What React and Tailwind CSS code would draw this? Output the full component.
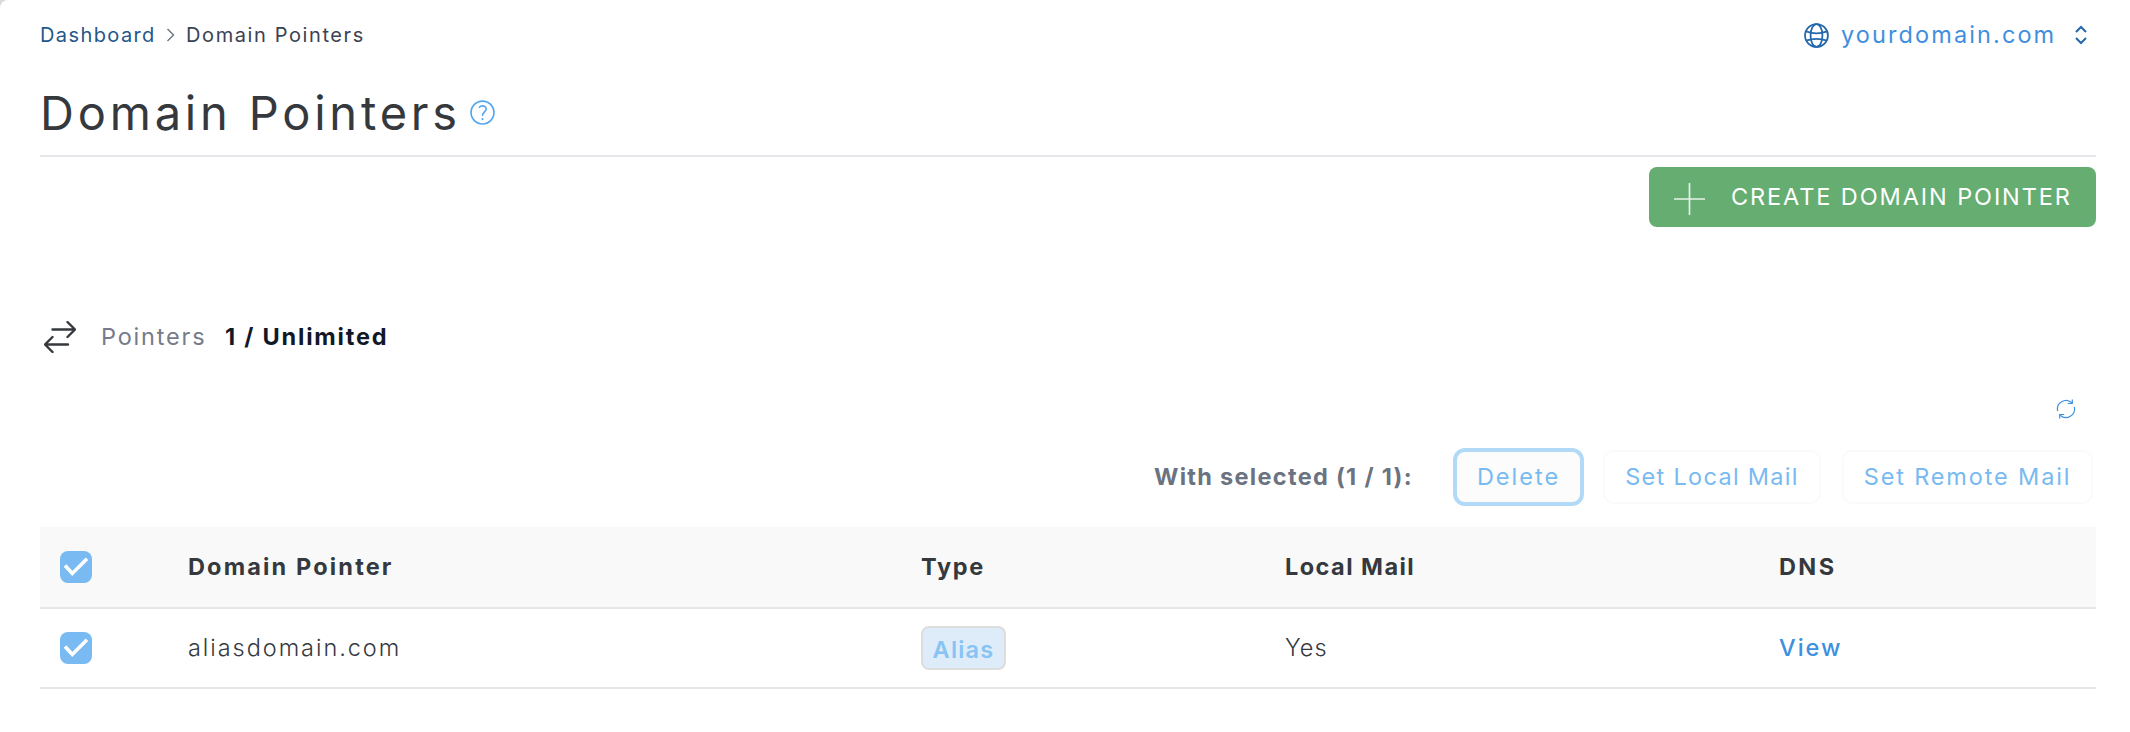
import { useState } from "react";

const pointers = [
  { domain: "aliasdomain.com", type: "Alias", localMail: "Yes" },
];

function GlobeIcon() {
  return (
    <svg width="25" height="25" viewBox="0 0 24 24" fill="none" stroke="currentColor" strokeWidth="1.7">
      <circle cx="12" cy="12" r="11" />
      <ellipse cx="12" cy="12" rx="5.7" ry="11" />
      <path d="M2 8c6 2.4 14 2.4 20 0M1.8 17c6-2 14.4-2 20.4 0" />
    </svg>
  );
}

function HelpIcon() {
  return (
    <svg width="25" height="25" viewBox="0 0 24 24" fill="none" stroke="currentColor" strokeWidth="1.6" strokeLinecap="round">
      <circle cx="12" cy="12" r="11" />
      <path d="M9 6.9c1-1.1 2.3-1.3 3.4-1.2 2 .2 3.3 1.5 3.1 3.2-.2 2.3-3.2 2.8-3.5 5.6" />
      <path d="M12 18.3v.1" strokeWidth="1.9" />
    </svg>
  );
}

function SwapIcon() {
  return (
    <svg width="32" height="32" viewBox="0 0 32 32" fill="none" stroke="currentColor" strokeWidth="2.4" strokeLinecap="round" strokeLinejoin="round">
      <path d="M8.5 8.5H31M23.5 1l7.5 7.5-7.5 7.5M24 23.5H1M8.5 16L1 23.5 8.5 31" />
    </svg>
  );
}

function RefreshIcon() {
  return (
    <svg width="20" height="20" viewBox="0 0 20 20" fill="none" stroke="currentColor" strokeWidth="1.2">
      <path d="M1.7 12.2A8.6 8.6 0 0 1 15.8 3.8M18.3 7.8A8.6 8.6 0 0 1 4.2 16.2" />
      <path d="M16.3.5v4h-4.5M3.7 19.5v-4h4.5" />
    </svg>
  );
}

function Checkbox({ checked, onChange }) {
  return (
    <button onClick={onChange} className="flex w-8 h-8 rounded-lg bg-[#78baf1]">
      {checked && (
        <svg width="32" height="32" viewBox="0 0 32 32" fill="none" stroke="white" strokeWidth="3.6">
          <path d="M5 14.5l7.3 8L27 7.8" />
        </svg>
      )}
    </button>
  );
}

export default function App() {
  const [selected, setSelected] = useState(true);
  const toggle = () => setSelected(!selected);

  return (
    <div className="bg-[#d8dade]">
      <div className="w-[2130px] h-[732px] pl-10 pr-[34px] bg-white rounded-tl-lg overflow-hidden font-['Inter',sans-serif] text-[23.5px] leading-8 text-[#35393e] whitespace-nowrap">
        <header className="flex items-center justify-between h-[70px]">
          <nav className="flex items-center text-[20px] text-[#3b4252]">
            <a href="#" className="w-[127px] text-[#25578a] tracking-[1.4px]">Dashboard</a>
            <svg width="19" height="14" viewBox="0 0 19 14" fill="none" stroke="#6b7280" strokeWidth="1.4">
              <path d="M0.5 1l6 6-6 6" />
            </svg>
            <span className="tracking-[1.6px]">Domain Pointers</span>
          </nav>
          <button className="flex items-center w-[292px] text-[#2468ab]">
            <GlobeIcon />
            <span className="w-[234px] pl-3 text-left text-[#3f8fdf] tracking-[2.1px]">yourdomain.com</span>
            <svg className="ml-3" width="12" height="20" viewBox="0 0 12 20" fill="none" stroke="currentColor" strokeWidth="2">
              <path d="M1 7l5-5 5 5M1 13l5 5 5-5" />
            </svg>
          </button>
        </header>

        <div className="flex items-center h-[87px] border-b-2 border-[#e5e7eb] text-[#53a7f0]">
          <h1 className="w-[430px] text-[47px] leading-[60px] text-[#35393e] tracking-[3.8px]">Domain Pointers</h1>
          <HelpIcon />
        </div>

        <div className="flex justify-end mt-[10px]">
          <button className="flex items-center w-[447px] h-[60px] pl-[25px] rounded-lg bg-[#65ad71] text-white">
            <svg className="mt-[3px]" width="32" height="32" viewBox="0 0 32 32" stroke="white" strokeWidth="1.7" opacity=".85">
              <path d="M0 16h31M15.5 0v32" />
            </svg>
            <span className="ml-[25px] tracking-[1.9px]">CREATE DOMAIN POINTER</span>
          </button>
        </div>

        <div className="flex items-center h-8 mt-[94px] pl-1">
          <SwapIcon />
          <span className="w-[124px] pl-[25px] box-content text-[#757b8a] tracking-[1.8px]">Pointers</span>
          <b className="font-bold text-[#111827] tracking-[1.8px]">1 / Unlimited</b>
        </div>

        <div className="flex justify-end mt-[46px] pr-5 text-[#3f8fdf]">
          <RefreshIcon />
        </div>

        <div className="flex items-center justify-end h-[58px] mt-[29px] pr-[3px] text-[#78baf1]">
          <span className="w-[299px] font-bold text-[#6b7280] tracking-[1.3px]">With selected (1 / 1):</span>
          <button className="w-[131px] h-[58px] mr-[19px] rounded-xl border-4 border-[#b2d9f5] bg-[#fcfcfc] tracking-[2px]">Delete</button>
          <button className="w-[218px] h-[54px] mr-[21px] rounded-[10px] border-2 border-[#fafafa] tracking-[1.3px]">Set Local Mail</button>
          <button className="w-[251px] h-[54px] rounded-[10px] border-2 border-[#fafafa] tracking-[1.85px]">Set Remote Mail</button>
        </div>

        <table className="w-[2056px] mt-[21px] table-fixed border-collapse text-left">
          <thead>
            <tr className="h-[81px] bg-[#f9f9f9] border-b-2 border-[#e5e5ea]">
              <th className="w-[148px] pl-5"><Checkbox checked={selected} onChange={toggle} /></th>
              <th className="w-[733px] font-bold tracking-[2.15px]">Domain Pointer</th>
              <th className="w-[364px] font-bold tracking-[1.7px]">Type</th>
              <th className="w-[494px] font-bold tracking-[1.45px]">Local Mail</th>
              <th className="font-bold tracking-[2.4px]">DNS</th>
            </tr>
          </thead>
          <tbody>
            {pointers.map((p) => (
              <tr key={p.domain} className="h-[80px] border-b-2 border-[#e5e5ea]">
                <td className="pl-5"><Checkbox checked={selected} onChange={toggle} /></td>
                <td className="font-light tracking-[1.95px]">{p.domain}</td>
                <td>
                  <span className="flex items-center justify-center w-[85px] h-11 pt-[3px] rounded-lg border-2 border-[#dddddd] bg-[#deecfa] font-semibold text-[#87c4f4] tracking-[1.2px]">{p.type}</span>
                </td>
                <td className="font-light tracking-[1px]">{p.localMail}</td>
                <td><a href="#" className="font-medium text-[#3f8fdf] tracking-[2px]">View</a></td>
              </tr>
            ))}
          </tbody>
        </table>
      </div>
    </div>
  );
}
